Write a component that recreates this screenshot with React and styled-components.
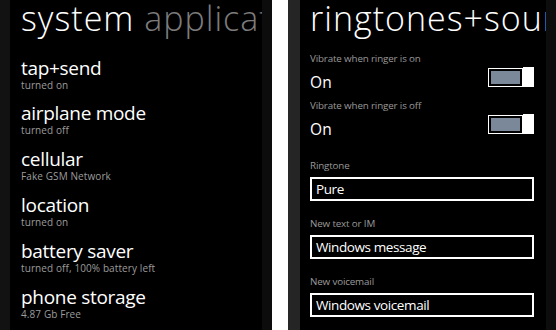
import React from "react";
import styled, { createGlobalStyle } from "styled-components";

const Global = createGlobalStyle`
  html, body { margin: 0; padding: 0; background: #ffffff; }
  body { font-family: "Open Sans", "Noto Sans", sans-serif; }
`;

const Page = styled.div`
  display: flex;
  gap: 16px;
  width: 556px;
  height: 330px;
  overflow: hidden;
`;

const Panel = styled.div`
  flex: 0 0 ${(p) => p.$w}px;
  width: ${(p) => p.$w}px;
  min-width: 0;
  overflow: hidden;
  display: flex;
  background: linear-gradient(90deg, ${(p) => p.$edgeL} 0, #0c0c0c 100%);
  padding: ${(p) => p.$pad};
  box-sizing: border-box;
`;

const Screen = styled.div`
  flex: 1;
  background: #000;
  overflow: hidden;
  padding: ${(p) => p.$pad};
  display: flex;
  flex-direction: column;
  min-width: 0;
`;

const Title = styled.div`
  font-family: "Open Sans", sans-serif;
  font-weight: 300;
  font-size: 34px;
  line-height: 36px;
  color: #fff;
  white-space: nowrap;
  letter-spacing: 1px;
`;

const Dim = styled.span`
  color: #7c7c7c;
`;

const List = styled.div`
  display: flex;
  flex-direction: column;
  margin-top: 20.6px;
`;

const Item = styled.div`
  height: 45.8px;
  display: flex;
  flex-direction: column;
`;

const ItemTitle = styled.div`
  font-size: 19px;
  line-height: 22px;
  color: #fff;
  white-space: nowrap;
  letter-spacing: -0.3px;
`;

const ItemSub = styled.div`
  font-size: 10px;
  line-height: 12px;
  color: #9c9c9c;
  white-space: nowrap;
  letter-spacing: 0.1px;
`;

const Settings = styled.div`
  display: flex;
  flex-direction: column;
  margin-top: 16px;
`;

const Setting = styled.div`
  display: flex;
  flex-direction: column;
  margin-bottom: ${(p) => p.$mb}px;
`;

const Label = styled.div`
  font-size: 9.8px;
  line-height: 14px;
  color: #9a9a9a;
  white-space: nowrap;
  letter-spacing: -0.15px;
`;

const ValueRow = styled.div`
  display: flex;
  justify-content: space-between;
  align-items: flex-start;
  margin-top: 4px;
`;

const Value = styled.div`
  font-size: 15.5px;
  line-height: 24px;
  color: #fff;
  letter-spacing: 0.3px;
`;

const Toggle = styled.div`
  display: flex;
  align-items: center;
  margin-top: -3px;
  height: 20px;
`;

const Track = styled.div`
  width: 35px;
  height: 19px;
  box-sizing: border-box;
  border: 1.5px solid #fff;
  padding: 2px;
  background: #000;
  display: flex;
`;

const Fill = styled.div`
  flex: 1;
  background: #7a8899;
`;

const Thumb = styled.div`
  width: 11px;
  height: 20px;
  background: #fff;
`;

const Box = styled.div`
  margin-top: 4px;
  height: 24px;
  box-sizing: border-box;
  border: 2px solid #fff;
  padding: 0 4px;
  display: flex;
  align-items: center;
  font-size: 13.5px;
  color: #fff;
  white-space: nowrap;
  letter-spacing: -0.4px;
`;

const items = [
  ["tap+send", "turned on"],
  ["airplane mode", "turned off"],
  ["cellular", "Fake GSM Network"],
  ["location", "turned on"],
  ["battery saver", "turned off, 100% battery left"],
  ["phone storage", "4.87 Gb Free"],
];

const toggles = ["Vibrate when ringer is on", "Vibrate when ringer is off"];
const pickers = [
  ["Ringtone", "Pure"],
  ["New text or IM", "Windows message"],
  ["New voicemail", "Windows voicemail"],
];

export default function App() {
  return (
    <>
      <Global />
      <Page>
        <Panel $w={272} $edgeL="#121212" $pad="0 10px">
          <Screen $pad="0 0 0 11px">
            <Title>
              system <Dim>applications</Dim>
            </Title>
            <List>
              {items.map(([t, s]) => (
                <Item key={t}>
                  <ItemTitle>{t}</ItemTitle>
                  <ItemSub>{s}</ItemSub>
                </Item>
              ))}
            </List>
          </Screen>
        </Panel>
        <Panel $w={268} $edgeL="#262626" $pad="0 10px 0 12px">
          <Screen $pad="0 12px 0 10px">
            <Title>ringtones+sounds</Title>
            <Settings>
              {toggles.map((l, i) => (
                <Setting key={l} $mb={i === 0 ? 5 : 18}>
                  <Label>{l}</Label>
                  <ValueRow>
                    <Value>On</Value>
                    <Toggle>
                      <Track>
                        <Fill />
                      </Track>
                      <Thumb />
                    </Toggle>
                  </ValueRow>
                </Setting>
              ))}
              {pickers.map(([l, v]) => (
                <Setting key={l} $mb={16}>
                  <Label>{l}</Label>
                  <Box>{v}</Box>
                </Setting>
              ))}
            </Settings>
          </Screen>
        </Panel>
      </Page>
    </>
  );
}
